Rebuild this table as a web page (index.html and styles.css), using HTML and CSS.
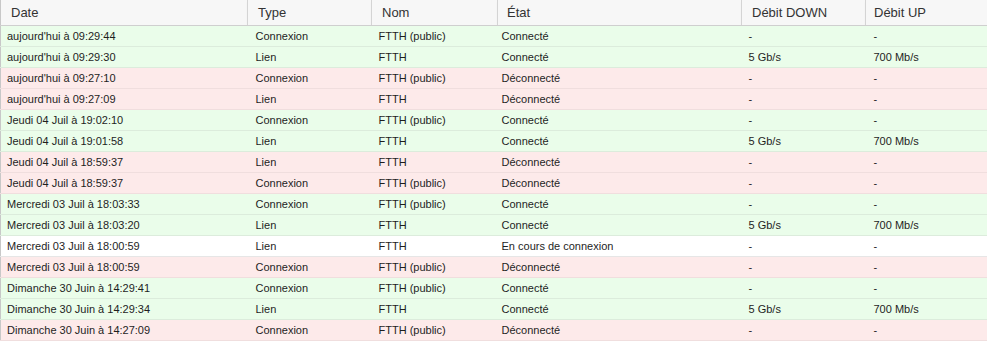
FILE: index.html
```html
<!DOCTYPE html>
<html lang="fr">
<head>
<meta charset="utf-8">
<link rel="stylesheet" href="styles.css">
</head>
<body>
<table class="grid">
  <colgroup>
    <col class="c-date"><col class="c-type"><col class="c-nom"><col class="c-etat"><col class="c-down"><col class="c-up">
  </colgroup>
  <thead>
    <tr><th>Date</th><th>Type</th><th>Nom</th><th class="h-etat">État</th><th>Débit DOWN</th><th class="h-up">Débit UP</th></tr>
  </thead>
  <tbody>
    <tr class="ok"><td>aujourd'hui à 09:29:44</td><td>Connexion</td><td>FTTH (public)</td><td>Connecté</td><td>-</td><td>-</td></tr>
    <tr class="ok"><td>aujourd'hui à 09:29:30</td><td>Lien</td><td>FTTH</td><td>Connecté</td><td>5 Gb/s</td><td>700 Mb/s</td></tr>
    <tr class="ko"><td>aujourd'hui à 09:27:10</td><td>Connexion</td><td>FTTH (public)</td><td>Déconnecté</td><td>-</td><td>-</td></tr>
    <tr class="ko"><td>aujourd'hui à 09:27:09</td><td>Lien</td><td>FTTH</td><td>Déconnecté</td><td>-</td><td>-</td></tr>
    <tr class="ok"><td>Jeudi 04 Juil à 19:02:10</td><td>Connexion</td><td>FTTH (public)</td><td>Connecté</td><td>-</td><td>-</td></tr>
    <tr class="ok"><td>Jeudi 04 Juil à 19:01:58</td><td>Lien</td><td>FTTH</td><td>Connecté</td><td>5 Gb/s</td><td>700 Mb/s</td></tr>
    <tr class="ko"><td>Jeudi 04 Juil à 18:59:37</td><td>Lien</td><td>FTTH</td><td>Déconnecté</td><td>-</td><td>-</td></tr>
    <tr class="ko"><td>Jeudi 04 Juil à 18:59:37</td><td>Connexion</td><td>FTTH (public)</td><td>Déconnecté</td><td>-</td><td>-</td></tr>
    <tr class="ok"><td>Mercredi 03 Juil à 18:03:33</td><td>Connexion</td><td>FTTH (public)</td><td>Connecté</td><td>-</td><td>-</td></tr>
    <tr class="ok"><td>Mercredi 03 Juil à 18:03:20</td><td>Lien</td><td>FTTH</td><td>Connecté</td><td>5 Gb/s</td><td>700 Mb/s</td></tr>
    <tr class="pending"><td>Mercredi 03 Juil à 18:00:59</td><td>Lien</td><td>FTTH</td><td>En cours de connexion</td><td>-</td><td>-</td></tr>
    <tr class="ko"><td>Mercredi 03 Juil à 18:00:59</td><td>Connexion</td><td>FTTH (public)</td><td>Déconnecté</td><td>-</td><td>-</td></tr>
    <tr class="ok"><td>Dimanche 30 Juin à 14:29:41</td><td>Connexion</td><td>FTTH (public)</td><td>Connecté</td><td>-</td><td>-</td></tr>
    <tr class="ok"><td>Dimanche 30 Juin à 14:29:34</td><td>Lien</td><td>FTTH</td><td>Connecté</td><td>5 Gb/s</td><td>700 Mb/s</td></tr>
    <tr class="ko"><td>Dimanche 30 Juin à 14:27:09</td><td>Connexion</td><td>FTTH (public)</td><td>Déconnecté</td><td>-</td><td>-</td></tr>
  </tbody>
</table>
</body>
</html>
```
FILE: styles.css
```css
html, body {
  margin: 0;
  padding: 0;
  background: #ffffff;
}
body {
  font-family: "Liberation Sans", Arial, sans-serif;
  color: #222;
  overflow: hidden;
}
.grid {
  width: 987px;
  border-collapse: collapse;
  table-layout: fixed;
  border-left: 1px solid #c8c8c8;
}
.c-date { width: 247px; }
.c-type { width: 124px; }
.c-nom { width: 126px; }
.c-etat { width: 244px; }
.c-down { width: 124px; }
.c-up { width: auto; }
.grid th {
  height: 25px;
  padding: 0 0 0 10px;
  text-align: left;
  font-weight: normal;
  font-size: 13px;
  color: #333;
  background: #f7f7f7;
  border-left: 1px solid #d4d4d4;
  border-bottom: 1px solid #cfcfcf;
  box-shadow: 0 2px 2px rgba(0,0,0,0.12);
}
.grid th:first-child { border-left: none; }
.grid th.h-etat { padding-left: 9px; }
.grid th.h-up { padding-left: 8px; }
.grid td {
  height: 20px;
  padding: 0 0 0 7px;
  font-size: 11px;
  color: #1e1e1e;
  border-bottom: 1px solid #e6eee6;
  white-space: nowrap;
}
.grid td:first-child { padding-left: 6px; }
.grid td:nth-child(2) { padding-left: 8px; }
.grid td:nth-child(4) { padding-left: 4px; }
.grid td:nth-child(6) { padding-left: 8px; }
.grid tr.ok td { background: #eafdea; border-bottom-color: #dcecdc; }
.grid tr.ko td { background: #fdeaea; border-bottom-color: #f0dede; }
.grid tr.pending td { background: #ffffff; border-bottom-color: #e6e6e6; }
```
